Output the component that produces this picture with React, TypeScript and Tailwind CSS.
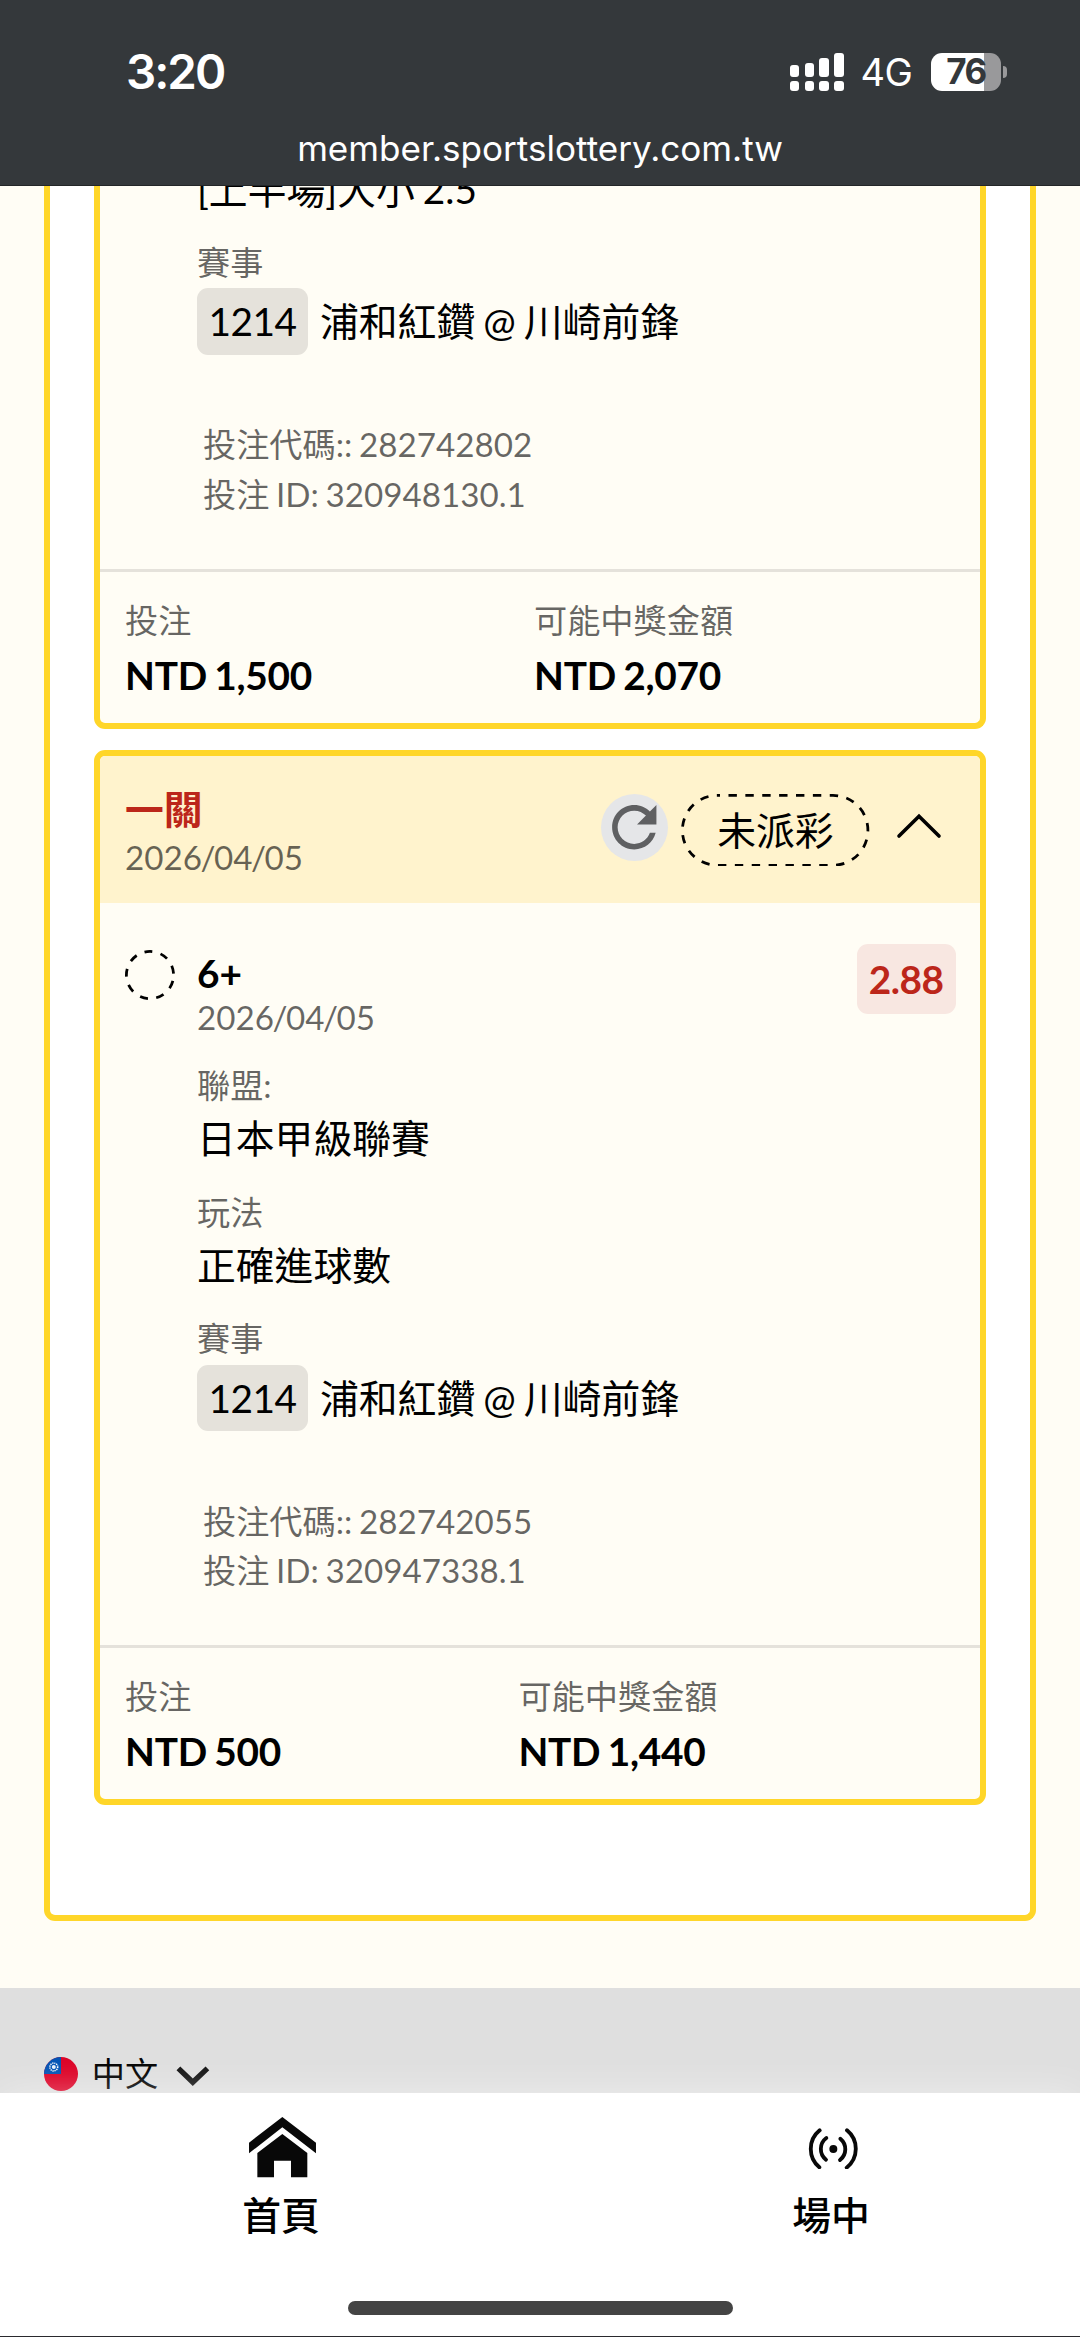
import React from 'react';

interface Field {
  label?: string;
  value: string;
}

interface Bet {
  title?: string;
  date?: string;
  pick?: string;
  odds?: string;
  fields: Field[];
  code: string;
  id: string;
  stake: string;
  payout: string;
  stakeClass: string;
}

const bets: Bet[] = [
  {
    fields: [{ value: '[上半場]大小 2.5' }],
    code: '282742802',
    id: '320948130.1',
    stake: 'NTD 1,500',
    payout: 'NTD 2,070',
    stakeClass: 'w-[409px]',
  },
  {
    title: '一關',
    date: '2026/04/05',
    pick: '6+',
    odds: '2.88',
    fields: [
      { label: '聯盟:', value: '日本甲級聯賽' },
      { label: '玩法', value: '正確進球數' },
    ],
    code: '282742055',
    id: '320947338.1',
    stake: 'NTD 500',
    payout: 'NTD 1,440',
    stakeClass: 'w-[393.4px]',
  },
];

const signalBars = ['h-[11.7px]', 'h-[14px]', 'h-[19px]', 'h-[23.7px]'];

const StatusBar = () => (
  <header className="relative z-10 h-[186px] shrink-0 border-b border-[#232628] bg-[#34383b] font-['Inter',sans-serif] text-white">
    <div className="flex h-[120px] items-start justify-between pl-[126px] pr-[73px] pt-[48px]">
      <span className="text-[47.5px] font-semibold leading-[48px] tracking-[-2px]">3:20</span>
      <div className="flex h-[48px] items-center">
        <div className="flex items-end gap-[5.5px]">
          {signalBars.map((height) => (
            <div key={height} className="flex flex-col gap-1">
              <span className={`w-[9.3px] rounded-[3px] bg-white ${height}`} />
              <span className="h-[10.7px] w-[9.3px] rounded-[3px] bg-white" />
            </div>
          ))}
        </div>
        <span className="ml-[17px] w-[54px] text-[38px] leading-[48px] tracking-[-0.5px]">4G</span>
        <div className="ml-[16.5px] flex h-[38.4px] w-[70px] items-center justify-center rounded-[11px] bg-[linear-gradient(to_right,#fff_76%,#99999b_76%)]">
          <span className="text-[35px] font-bold leading-none tracking-[-1.5px] text-[#34383b]">76</span>
        </div>
        <span className="ml-[2px] h-[12px] w-[4px] rounded-r-full bg-[#99999b]" />
      </div>
    </div>
    <p className="text-center text-[35.1px] leading-[56px]">member.sportslottery.com.tw</p>
  </header>
);

const RefreshIcon = () => (
  <svg viewBox="0 0 24 24" className="size-[66.5px] rounded-full bg-[#e5e6e8]" fill="#5f6062">
    <path d="M17.65 6.35C16.2 4.9 14.21 4 12 4c-4.42 0-7.99 3.58-7.99 8s3.57 8 7.99 8c3.73 0 6.84-2.55 7.73-6h-2.08c-.82 2.33-3.04 4-5.65 4-3.31 0-6-2.69-6-6s2.69-6 6-6c1.66 0 3.14.69 4.22 1.78L13 11h7V4l-2.35 2.35z" />
  </svg>
);

// Slashes sit tighter than Lato's default spacing
const DateText = ({ date = '', className }: { date?: string; className: string }) => (
  <p className={`text-[33.2px] text-black/60 ${className}`}>
    {date.split('/').map((part, index) => (
      <React.Fragment key={index}>
        {index > 0 && <span className="-mx-[1.5px]">/</span>}
        {part}
      </React.Fragment>
    ))}
  </p>
);

const BetHeader = ({ title, date }: { title: string; date?: string }) => (
  <div className="flex h-[146.7px] rounded-t-[5px] bg-[#fff3cd] pl-[25px]">
    <div className="w-[476px] pt-[28.5px]">
      <h2 className="text-[38.8px] font-bold leading-[48px] text-[#bc261a]">{title}</h2>
      <DateText date={date} className="leading-[48px]" />
    </div>
    <div className="pt-[38px]">
      <RefreshIcon />
    </div>
    <div className="relative ml-[13.8px] mt-[37.3px] h-[72.7px] w-[188.3px] text-center text-[38.8px] leading-[72.7px]">
      <svg className="absolute inset-0 size-full" fill="none" stroke="#000" strokeWidth="2.77">
        <rect x="1.4" y="1.4" width="185.5" height="69.9" rx="34.9" strokeDasharray="8.4 8.48" strokeDashoffset="5.7" />
      </svg>
      未派彩
    </div>
    <svg viewBox="0 0 46 28" className="ml-[26.3px] mt-[56px] h-[28px] w-[46px]" fill="none" stroke="#000" strokeWidth="3.6" strokeLinecap="round">
      <path d="M3 24 23 4.2 43 24" />
    </svg>
  </div>
);

const BetCard = ({ bet }: { bet: Bet }) => (
  <article
    className={`border-[6px] border-[#ffd629] bg-[#fffdf5] ${
      bet.title ? 'mt-[21.7px] rounded-[11px]' : 'rounded-b-[11px] border-t-0'
    }`}
  >
    {bet.title && <BetHeader title={bet.title} date={bet.date} />}

    {bet.pick && (
      <div className="flex items-start pl-[25px] pr-[24.3px] pt-[41.3px]">
        <svg viewBox="0 0 50 50" className="mt-[5.3px] size-[50px]" fill="none" stroke="#000" strokeWidth="2.77">
          <circle cx="25" cy="25" r="23.6" strokeDasharray="8 8.48" strokeDashoffset="-6" />
        </svg>
        <div className="ml-[22px] flex-1 pt-[7px]">
          <h3 className="text-[38.8px] font-bold leading-[45px]">{bet.pick}</h3>
          <DateText date={bet.date} className="leading-[43px]" />
        </div>
        <span className="h-[69.6px] w-[99px] rounded-[11px] bg-[#f8e7e1] text-center text-[38.8px] font-bold leading-[70px] tracking-[-0.5px] text-[#bc261a]">
          {bet.odds}
        </span>
      </div>
    )}

    <div className="pl-[97px]">
      {bet.fields.map((field) => (
        <div key={field.value} className={field.label ? 'pt-[20.2px] first:pt-[23.4px]' : ''}>
          {field.label && <p className="text-[33.2px] leading-[44px] text-black/60">{field.label}</p>}
          <p className="text-[38.8px] leading-[63px]">{field.value}</p>
        </div>
      ))}

      <div className="pt-[20.2px]">
        <p className="text-[33.2px] leading-[43px] text-black/60">賽事</p>
        <div className="mt-[4.6px] flex items-center text-[38.8px] leading-[66.4px]">
          <span className="w-[111px] rounded-[11px] bg-[#e5e2db] text-center tracking-[-0.5px]">1214</span>
          <span className="ml-[12px]">浦和紅鑽 @ 川崎前鋒</span>
        </div>
      </div>

      <div className="pb-[48.9px] pl-[6px] pt-[65.4px] text-[33.2px] leading-[49.8px] text-black/60">
        <p>投注代碼:: {bet.code}</p>
        <p>投注 ID: {bet.id}</p>
      </div>
    </div>

    <div className="flex border-t-[3px] border-[#e5e2db] pb-[13.6px] pl-[25px] pt-[26px]">
      <div className={bet.stakeClass}>
        <p className="text-[33.2px] leading-[44px] text-black/60">投注</p>
        <p className="text-[38.8px] font-bold leading-[67.4px] tracking-[-0.25px]">{bet.stake}</p>
      </div>
      <div>
        <p className="text-[33.2px] leading-[44px] text-black/60">可能中獎金額</p>
        <p className="text-[38.8px] font-bold leading-[67.4px] tracking-[-0.25px]">{bet.payout}</p>
      </div>
    </div>
  </article>
);

const TaiwanFlag = () => (
  <svg viewBox="0 0 34 34" className="size-[34px] overflow-hidden rounded-full">
    <rect width="34" height="34" fill="#dc0025" />
    <rect width="17" height="17" fill="#0052b4" />
    <circle cx="9.8" cy="10" r="3.9" fill="none" stroke="#fff" strokeWidth="1.5" strokeDasharray="1.2 0.84" />
    <circle cx="9.8" cy="10" r="2" fill="#e8f0fa" />
  </svg>
);

const LanguageBar = () => (
  <div className="flex h-[105px] shrink-0 items-start bg-[#dfdfdf] pl-[44px] pt-[69px]">
    <TaiwanFlag />
    <span className="ml-[13.8px] text-[33.2px] leading-[32px]">中文</span>
    <svg viewBox="0 0 34 20" className="ml-[18px] mt-[9px] h-[20px] w-[34px]" fill="none" stroke="#111" strokeWidth="5.4">
      <path d="M2.4 2.4 16.8 16.2 31.4 2.4" />
    </svg>
  </div>
);

const HomeIcon = () => (
  <svg viewBox="0 0 201 181" className="h-[60.3px] w-[67px]" fill="#080808">
    <path d="M100 0 201 77v32L100 31 0 109V77z" />
    <path d="M100 51 175 108v73h-49v-50H75v50H25v-73z" />
  </svg>
);

const LiveIcon = () => (
  <svg viewBox="0 0 152 124" className="h-[41.3px] w-[50.7px]" fill="none" stroke="#080808" strokeWidth="11.5" strokeLinecap="round">
    <path d="M35 7a71.8 71.8 0 0 0-1 111" />
    <path d="M55 30a41 41 0 0 0-1 65" />
    <path d="M97 32a41 41 0 0 1-1 64" />
    <path d="M117 7a71.8 71.8 0 0 1-1 112" />
    <circle cx="76" cy="63" r="12" fill="#080808" stroke="none" />
  </svg>
);

const TabBar = () => (
  <nav className="relative flex h-[244px] shrink-0 flex-col items-center border-b border-[#2a2a2e] bg-white shadow-[0_0_36px_rgba(255,255,255,0.45)]">
    <div className="flex h-[208px] w-full text-[38.8px] font-medium leading-[44px]">
      <div className="flex w-[562px] flex-col items-center pt-[24.3px]">
        <div className="flex h-[75.7px] pl-[3px]">
          <HomeIcon />
        </div>
        <span>首頁</span>
      </div>
      <div className="flex flex-1 flex-col items-center pl-[20px] pt-[35px]">
        <div className="flex h-[65px] pl-[5px]">
          <LiveIcon />
        </div>
        <span>場中</span>
      </div>
    </div>
    <span className="h-[14px] w-[385px] rounded-full bg-[#444]" />
  </nav>
);

const App = () => (
  <div className="flex h-[2337px] w-[1080px] flex-col overflow-hidden bg-[#fffdf5] font-['Lato','Noto_Sans_CJK_TC',sans-serif] text-black [word-spacing:-0.115em]">
    <StatusBar />
    <main className="-mt-[28.3px] h-[1830.3px] shrink-0 px-[44px]">
      <section className="rounded-b-[11px] border-[6px] border-t-0 border-[#ffd629] bg-white px-[44px] pb-[110.4px]">
        {bets.map((bet) => (
          <BetCard key={bet.code} bet={bet} />
        ))}
      </section>
    </main>
    <LanguageBar />
    <TabBar />
  </div>
);

export default App;
